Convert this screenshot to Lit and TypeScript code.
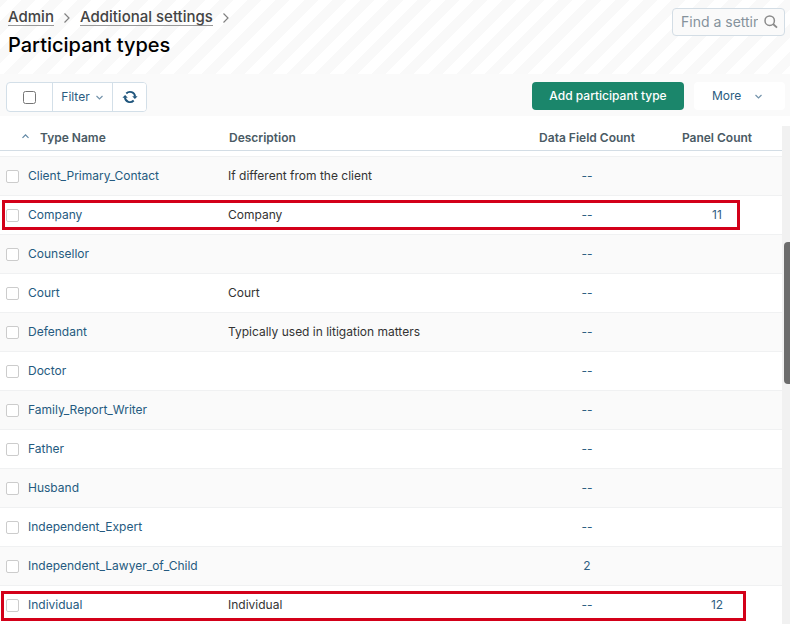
import { LitElement, html, css, svg } from "lit";
import { customElement, property } from "lit/decorators.js";
import { classMap } from "lit/directives/class-map.js";

interface ParticipantType {
  name: string;
  description?: string;
  fields?: number;
  panels?: number;
  mark?: "short" | "long";
}

const TYPES: ParticipantType[] = [
  { name: "Client_Primary_Contact", description: "If different from the client" },
  { name: "Company", description: "Company", panels: 11, mark: "short" },
  { name: "Counsellor" },
  { name: "Court", description: "Court" },
  { name: "Defendant", description: "Typically used in litigation matters" },
  { name: "Doctor" },
  { name: "Family_Report_Writer" },
  { name: "Father" },
  { name: "Husband" },
  { name: "Independent_Expert" },
  { name: "Independent_Lawyer_of_Child", fields: 2 },
  { name: "Individual", description: "Individual", panels: 12, mark: "long" },
];

const chevron = (direction: "up" | "down" | "right") => {
  const paths = {
    up: "M1.5 4.8 4.5 1.8 7.5 4.8",
    down: "M1.5 3 4.5 6 7.5 3",
    right: "M1.5 2.5 6 7 1.5 11.5",
  };
  const tall = direction === "right";
  return html`<svg
    class="chevron ${direction}"
    width=${tall ? 8 : 9}
    height=${tall ? 12 : 9}
    viewBox=${tall ? "0 0 8 12" : "0 0 9 9"}
    aria-hidden="true"
  >${svg`<path d=${paths[direction]} fill="none" stroke="currentColor" stroke-width=${tall ? 1.2 : 1.2} />`}</svg>`;
};

@customElement("settings-header")
export class SettingsHeader extends LitElement {
  static styles = css`
    :host {
      display: flex;
      justify-content: space-between;
      align-items: flex-start;
      box-sizing: border-box;
      height: 74px;
      padding: 8px 5px 0 8px;
      background: repeating-linear-gradient(
        135deg,
        #f9f9f9 0 5px,
        #fff 5px 15px,
        #f9f9f9 15px 20px
      );
    }
    .crumbs {
      display: flex;
      align-items: center;
      gap: 9px;
      height: 18px;
      color: #808080;
    }
    .crumb {
      font-size: 15px;
      line-height: 16px;
      font-weight: 500;
      color: #444;
      text-decoration: none;
      border-bottom: 1px solid #999;
    }
    h1 {
      margin: 7px 0 0;
      font-size: 20px;
      line-height: 24px;
      font-weight: 500;
      color: #000;
    }
    .search {
      display: flex;
      align-items: center;
      gap: 6px;
      box-sizing: border-box;
      width: 113px;
      height: 28px;
      padding: 0 6px 0 8px;
      border: 1px solid #d3dde5;
      border-radius: 4px;
      background: #fafafa;
      color: #8a8a8a;
    }
    .search input {
      flex: 1;
      min-width: 0;
      padding: 0;
      border: 0;
      outline: 0;
      background: none;
      font: 14px/20px Inter, sans-serif;
      color: #555;
    }
    .search input::placeholder {
      color: #85929c;
    }
  `;

  render() {
    return html`
      <div>
        <nav class="crumbs" aria-label="Breadcrumb">
          <a class="crumb" href="#admin">Admin</a>
          ${chevron("right")}
          <a class="crumb" href="#settings">Additional settings</a>
          ${chevron("right")}
        </nav>
        <h1>Participant types</h1>
      </div>
      <label class="search">
        <input type="text" placeholder="Find a setting" aria-label="Find a setting" />
        <svg width="14" height="14" viewBox="0 0 14 14" fill="none" stroke="currentColor" aria-hidden="true">
          <circle cx="5.7" cy="5.7" r="4.7" stroke-width="1.5" />
          <path d="M9 9 13 12.7" stroke-width="1.8" />
        </svg>
      </label>
    `;
  }
}

@customElement("list-toolbar")
export class ListToolbar extends LitElement {
  static styles = css`
    :host {
      display: flex;
      justify-content: space-between;
      align-items: flex-start;
      box-sizing: border-box;
      height: 42px;
      padding: 8px 5px 0 6px;
      background: #fafafa;
    }
    button {
      margin: 0;
      border: 0;
      font: 12px/16px Inter, sans-serif;
      color: #2b5c80;
      background: #fff;
    }
    .group {
      display: flex;
      box-sizing: border-box;
      height: 30px;
      border: 1px solid #d3dfe8;
      border-radius: 4px;
      background: #fff;
      overflow: hidden;
    }
    .group > * {
      display: flex;
      align-items: center;
      justify-content: center;
    }
    .group > * + * {
      border-left: 1px solid #d3dfe8;
    }
    .all {
      width: 45px;
    }
    .all input {
      width: 13px;
      height: 13px;
      margin: 0;
    }
    .filter {
      width: 60px;
      padding: 0;
      gap: 5px;
    }
    .refresh {
      width: 34px;
      padding: 0;
    }
    .actions {
      display: flex;
      gap: 10px;
    }
    .add {
      width: 152px;
      height: 28px;
      padding: 0;
      border-radius: 4px;
      background: #1b866b;
      color: #fff;
      font-weight: 500;
    }
    .more {
      display: flex;
      align-items: center;
      gap: 13px;
      width: 91px;
      height: 28px;
      padding: 0 0 0 18px;
      border-radius: 4px;
    }
    .chevron {
      color: #7393ab;
    }
  `;

  render() {
    return html`
      <div class="group">
        <label class="all"><input type="checkbox" aria-label="Select all" /></label>
        <button class="filter">Filter ${chevron("down")}</button>
        <button class="refresh" aria-label="Refresh">
          <svg width="16" height="14" viewBox="0 0 16 14" aria-hidden="true">
            <g fill="none" stroke="#20567d" stroke-width="1.9">
              <path d="M4.3 3.5A5.1 5.1 0 0 1 13.1 6.6" />
              <path d="M11.7 10.5A5.1 5.1 0 0 1 2.9 7.4" />
            </g>
            <path d="M10.2 6.2H15.6L12.9 9ZM0.4 7.8H5.8L3.1 5Z" fill="#20567d" />
          </svg>
        </button>
      </div>
      <div class="actions">
        <button class="add">Add participant type</button>
        <button class="more">More ${chevron("down")}</button>
      </div>
    `;
  }
}

@customElement("type-table")
export class TypeTable extends LitElement {
  @property({ attribute: false }) types: ParticipantType[] = [];

  static styles = css`
    :host {
      display: block;
    }
    table {
      width: 100%;
      table-layout: fixed;
      border-collapse: separate;
      border-spacing: 0;
      font-size: 12px;
      line-height: 16px;
    }
    .pick {
      width: 22px;
    }
    .name {
      width: 200px;
    }
    .count {
      width: 130px;
    }
    th {
      height: 35px;
      padding: 9px 6px 0 7px;
      box-sizing: border-box;
      border-bottom: 1px solid #d3dde5;
      font-weight: 600;
      text-align: left;
      color: #4a5a64;
      white-space: nowrap;
    }
    .sort {
      display: flex;
      align-items: center;
      gap: 10px;
      padding: 0;
      margin: 0 0 0 -8px;
      border: 0;
      background: none;
      font: inherit;
      color: inherit;
    }
    .chevron {
      color: #5f86a3;
    }
    td {
      box-sizing: border-box;
      height: 39px;
      padding: 0 6px;
      border-bottom: 1px solid #f0f1f2;
      color: #333;
    }
    .spacer td {
      height: 6px;
      padding: 0;
    }
    tbody tr {
      position: relative;
    }
    .shaded {
      background: #fafafa;
    }
    td a {
      color: #255a80;
      text-decoration: none;
    }
    th.number,
    td.number {
      text-align: center;
      padding-left: 0;
      padding-right: 0;
    }
    td.number {
      color: #2f5f82;
    }
    .box {
      padding-right: 0;
    }
    .box input {
      appearance: none;
      display: block;
      width: 13px;
      height: 13px;
      margin: 0;
      border: 1px solid #ccc;
      border-radius: 2px;
      background: #fff;
    }
    .short .box::after,
    .long .box::after {
      content: "";
      position: absolute;
      box-sizing: border-box;
      top: 4px;
      height: 30px;
      left: 2px;
      right: 42px;
      border: 3px solid #d30019;
      pointer-events: none;
    }
    .long .box::after {
      top: 5px;
      left: 1px;
      right: 36px;
    }
  `;

  render() {
    return html`
      <table>
        <colgroup>
          <col class="pick" /><col class="name" /><col /><col class="count" /><col class="count" />
        </colgroup>
        <thead>
          <tr>
            <th></th>
            <th scope="col"><button class="sort">${chevron("up")}Type Name</button></th>
            <th scope="col">Description</th>
            <th scope="col" class="number">Data Field Count</th>
            <th scope="col" class="number">Panel Count</th>
          </tr>
        </thead>
        <tbody>
          <tr class="spacer"><td colspan="5"></td></tr>
          ${this.types.map(
            (type, index) => html`
              <tr
                class=${classMap({
                  shaded: index % 2 === 0,
                  short: type.mark === "short",
                  long: type.mark === "long",
                })}
              >
                <td class="box"><input type="checkbox" aria-label=${`Select ${type.name}`} /></td>
                <td><a href="#${type.name}">${type.name}</a></td>
                <td>${type.description}</td>
                <td class="number">${type.fields ?? "--"}</td>
                <td class="number">${type.panels}</td>
              </tr>
            `
          )}
        </tbody>
      </table>
    `;
  }
}

@customElement("app-root")
export class AppRoot extends LitElement {
  static styles = css`
    :host {
      display: flex;
      flex-direction: column;
      min-height: 100vh;
      font-family: Inter, sans-serif;
      background: #fff;
    }
    .content {
      display: flex;
      flex: 1;
    }
    type-table {
      flex: 1;
      min-width: 0;
    }
    .track {
      width: 8px;
      box-sizing: border-box;
      margin-top: 10px;
      padding: 116px 0 0 2px;
      background: #f1f1f1;
    }
    .thumb {
      height: 142px;
      border-radius: 4px 0 0 4px;
      background: #6c6c6c;
    }
  `;

  render() {
    return html`
      <settings-header></settings-header>
      <list-toolbar></list-toolbar>
      <main class="content">
        <type-table .types=${TYPES}></type-table>
        <div class="track"><div class="thumb"></div></div>
      </main>
    `;
  }
}
